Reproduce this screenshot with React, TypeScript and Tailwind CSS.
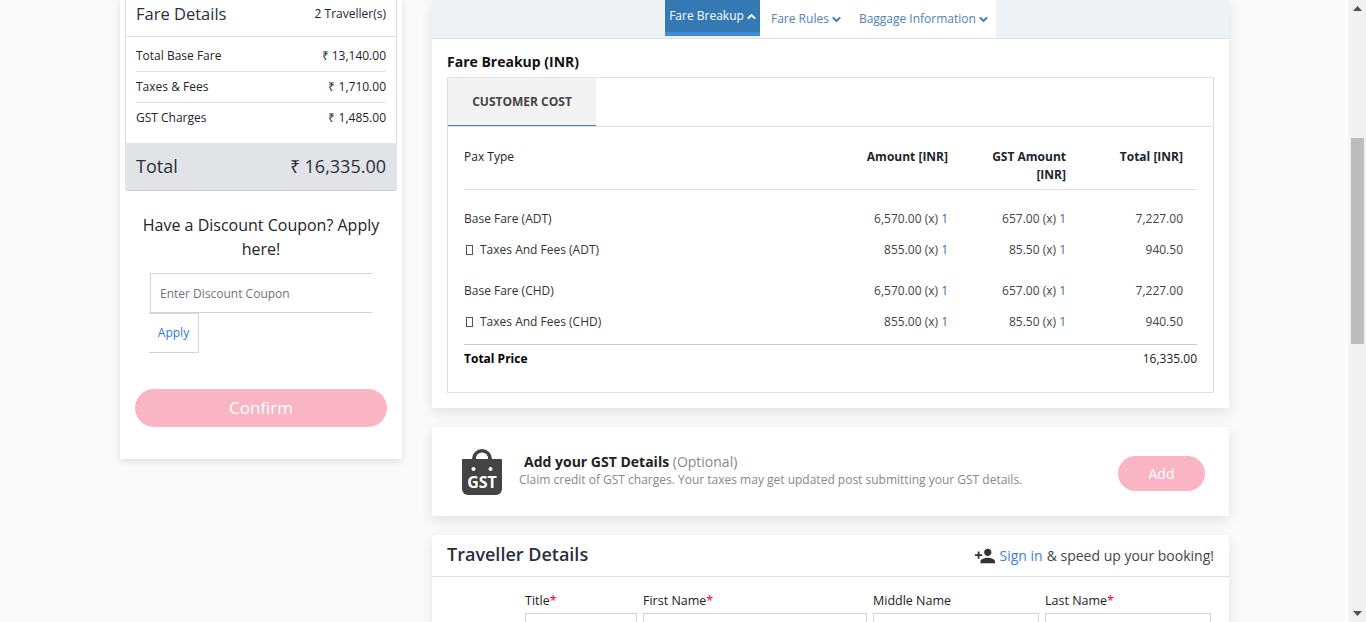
import React from "react";
import { FaChevronDown, FaChevronUp } from "react-icons/fa";
import { MdPersonAdd } from "react-icons/md";

const fareRows = [
  { label: "Total Base Fare", value: "₹ 13,140.00" },
  { label: "Taxes & Fees", value: "₹ 1,710.00" },
  { label: "GST Charges", value: "₹ 1,485.00" },
];

const breakup = [
  { label: "Base Fare (ADT)", amount: "6,570.00", gst: "657.00", total: "7,227.00", box: false, gap: false },
  { label: "Taxes And Fees (ADT)", amount: "855.00", gst: "85.50", total: "940.50", box: true, gap: false },
  { label: "Base Fare (CHD)", amount: "6,570.00", gst: "657.00", total: "7,227.00", box: false, gap: true },
  { label: "Taxes And Fees (CHD)", amount: "855.00", gst: "85.50", total: "940.50", box: true, gap: false },
];

const travellerFields = [
  { label: "Title", width: "w-[112px]", required: true },
  { label: "First Name", width: "w-[224px]", required: true },
  { label: "Middle Name", width: "w-[166px]", required: false },
  { label: "Last Name", width: "w-[166px]", required: true },
];

const Qty = ({ value }: { value: string }) => (
  <span>
    {value} (x) <span className="text-[#3b6fb5]">1</span>
  </span>
);

const GstIcon = () => (
  <svg width="40" height="46" viewBox="0 0 40 46" className="mt-[1px] shrink-0">
    <path d="M10 12V10a10 10 0 0 1 20 0v2h-4V10a6 6 0 0 0-12 0v2z" fill="#444" />
    <path d="M1 10h38a1 1 0 0 1 1 1v29a6 6 0 0 1-6 6H6a6 6 0 0 1-6-6V11a1 1 0 0 1 1-1z" fill="#444" />
    <path d="M14 10V9.500a6 6 0 0 1 12 0V10z" fill="#fff" />
    <circle cx="11.500" cy="20" r="2" fill="#fff" />
    <circle cx="28.500" cy="20" r="2" fill="#fff" />
    <text x="20" y="39" textAnchor="middle" fontFamily="Open Sans" fontWeight="700" fontSize="16" fill="#fff">
      GST
    </text>
  </svg>
);

export default function App() {
  return (
    <div className="flex h-[622px] w-[1366px] overflow-hidden bg-[#fafafa] font-['Open_Sans',sans-serif] text-[#212529]">
      <div className="flex flex-1 items-start pl-[120px]">
        {/* left column */}
        <aside className="h-[459px] w-[282px] shrink-0 bg-white px-[5px] shadow-[0_2px_8px_rgba(0,0,0,0.12)]">
          <div className="rounded-b border-x border-b border-[#dcdde0] border-b-[#c4c5c9]">
            <div className="flex h-[37px] items-center justify-between border-b border-[#dee2e6] px-2.5 pb-[8px]">
              <span className="text-[16.500px] font-medium text-[#2a2f3a]">Fare Details</span>
              <span className="text-xs">2 Traveller(s)</span>
            </div>
            <div className="mx-2.5 pt-1">
              {fareRows.map((r, i) => (
                <div
                  key={r.label}
                  className={`flex items-center justify-between text-xs ${i < 2 ? "h-[31px] border-b border-[#dee2e6]" : "h-[30px]"}`}
                >
                  <span>{r.label}</span>
                  <span>{r.value}</span>
                </div>
              ))}
            </div>
            <div className="-mx-px mt-2.5 flex h-[47px] items-center justify-between bg-[#e2e3e7] px-[11px] pb-[1px] text-[#2a2f3a]">
              <span className="text-lg">Total</span>
              <span className="text-lg">₹ 16,335.00</span>
            </div>
          </div>
          <p className="mx-auto mt-[22px] w-[250px] text-center text-base leading-6">
            Have a Discount Coupon? Apply here!
          </p>
          <div className="ml-[25px] mt-3 flex h-10 w-[222px] items-center border-y border-l border-[#ced4da] pl-[9px] pt-[2px] text-xs text-[#6c757d]">
            Enter Discount Coupon
          </div>
          <div className="ml-[24px] flex h-10 w-[50px] items-center justify-center border-y border-r border-[#ced4da] text-xs text-[#2f74e6]">
            Apply
          </div>
          <button className="mx-2.5 mt-9 h-[38px] w-[252px] rounded-full bg-[#f9b5c4] text-[17px] font-medium text-white">
            Confirm
          </button>
        </aside>

        {/* right column */}
        <main className="ml-[30px] flex w-[797px] shrink-0 flex-col gap-[19px]">
          <section className="h-[408px] bg-white px-[15px] shadow-[0_4px_12px_rgba(0,0,0,0.1)]">
            <div className="-mx-[15px] flex h-[39px] items-start border-b border-[#dee2e6] bg-[#eff2f5] pl-[233px]">
              <div className="flex h-9 w-[95px] items-start justify-center gap-[3px] border-b-4 border-[#3d8bdb] bg-[#3478b4] pt-[8px] text-xs leading-4 text-white">
                Fare Breakup
                <FaChevronUp className="mt-[4px] stroke-current stroke-[40] text-[9px]" />
              </div>
              <div className="flex h-[38px] w-[236px] items-center gap-[18px] bg-white pl-[11px] text-xs text-[#4f81bd]">
                <span className="flex items-center gap-[3px]">
                  Fare Rules <FaChevronDown className="stroke-current stroke-[40] text-[9px] text-[#3478b4]" />
                </span>
                <span className="flex items-center gap-[3px]">
                  Baggage Information <FaChevronDown className="stroke-current stroke-[40] text-[9px] text-[#3478b4]" />
                </span>
              </div>
            </div>

            <h2 className="mt-[13px] h-[25px] text-sm font-bold leading-[19px] text-[#111]">Fare Breakup (INR)</h2>

            <div className="h-[316px] border border-[#e0e0e0]">
              <div className="h-[49px] border-b border-[#dee2e6]">
                <div className="flex h-[48px] w-[148px] items-center justify-center border-b border-[#4d7fc4] bg-[#f3f3f3] pt-px text-xs font-bold text-[#444]">
                  CUSTOMER COST
                </div>
              </div>

              <div className="px-4 text-xs">
                <div className="flex h-[63px] items-start border-b border-[#dee2e6] pt-[21px] leading-[18px]">
                  <span className="flex-1">Pax Type</span>
                  <span className="font-bold">Amount [INR]</span>
                  <span className="w-[118px] pl-[40px] text-right font-bold">GST Amount [INR]</span>
                  <span className="w-[117px] text-right font-bold">Total [INR]</span>
                  <span className="w-[14px]" />
                </div>
                <div className="pt-[13px]">
                  {breakup.map((r) => (
                    <div key={r.label} className={`flex h-[31px] items-center ${r.gap ? "mt-[10px]" : ""}`}>
                      <span className="flex flex-1 items-center text-[#333]">
                        {r.box && <span className="ml-[2px] mr-[7px] inline-block h-[10px] w-[7px] border border-[#555]" />}
                        {r.label}
                      </span>
                      <span className="w-[118px] text-right text-[#444]"><Qty value={r.amount} /></span>
                      <span className="w-[118px] text-right text-[#444]"><Qty value={r.gst} /></span>
                      <span className="w-[117px] text-right text-[#444]">{r.total}</span>
                      <span className="w-[14px]" />
                    </div>
                  ))}
                </div>
                <div className="mt-[7px] flex h-[28px] items-center border-t border-[#c8c8c8] text-[#222]">
                  <span className="flex-1 font-bold text-black">Total Price</span>
                  <span>16,335.00</span>
                </div>
              </div>
            </div>
          </section>

          <section className="flex h-[89px] items-center bg-white pl-[30px] pr-6 shadow-[0_4px_12px_rgba(0,0,0,0.1)]">
            <GstIcon />
            <div className="ml-[17px] flex-1 pb-[2px]">
              <p className="ml-[5px] text-sm leading-[18px]">
                <span className="font-bold text-[#222]">Add your GST Details</span>{" "}
                <span className="text-[#888]">(Optional)</span>
              </p>
              <p className="mt-[1px] text-xs leading-4 text-[#888]">
                Claim credit of GST charges. Your taxes may get updated post submitting your GST details.
              </p>
            </div>
            <button className="mt-1 h-[35px] w-[87px] rounded-full bg-[#f9b5c4] text-sm text-white">Add</button>
          </section>

          <section className="flex-1 rounded-t bg-white shadow-[0_4px_12px_rgba(0,0,0,0.1)]">
            <div className="flex h-[42px] items-center justify-between border-b border-[#dee2e6] px-[15px]">
              <h2 className="pb-[4px] text-lg font-semibold text-[#2a2f3a]">Traveller Details</h2>
              <p className="flex items-center text-sm text-[#444]">
                <MdPersonAdd className="mr-[3px] text-[22px] text-[#333]" />
                <span className="mr-1 text-[#3f7fd6]">Sign in</span> &amp; speed up your booking!
              </p>
            </div>
            <div className="flex gap-1.5 pl-[93px] pt-4">
              {travellerFields.map((f) => (
                <div key={f.label} className={f.width}>
                  <div className="h-5 text-[12.500px] font-medium leading-4 text-[#222]">
                    {f.label}
                    {f.required && <span className="text-red-600">*</span>}
                  </div>
                  <div className="h-9 border border-[#ced4da]" />
                </div>
              ))}
            </div>
          </section>
        </main>
      </div>

      {/* scrollbar */}
      <div className="flex h-full w-[17px] shrink-0 flex-col items-center bg-[#f1f1f1]">
        <svg width="9" height="5" viewBox="0 0 9 5" className="mt-[6px]"><path d="M4.500 0L9 5H0z" fill="#505050" /></svg>
        <div className="mt-[127px] h-[206px] w-[13px] bg-[#bcbcbc]" />
        <svg width="9" height="5" viewBox="0 0 9 5" className="mt-auto mb-[6px]"><path d="M0 0h9L4.500 5z" fill="#505050" /></svg>
      </div>
    </div>
  );
}
